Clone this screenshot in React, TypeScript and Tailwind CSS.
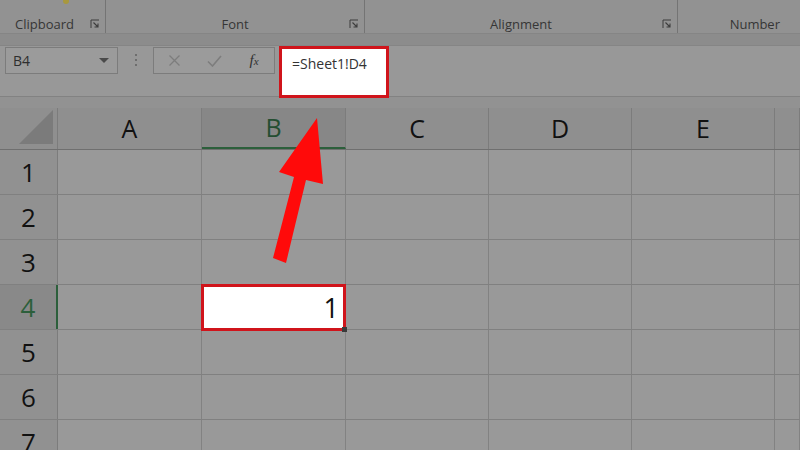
const columns = [
  { label: "A", width: "w-[144px]" },
  { label: "B", width: "w-[144px]" },
  { label: "C", width: "w-[143px]" },
  { label: "D", width: "w-[143px]" },
  { label: "E", width: "w-[143px]" },
  { label: "", width: "flex-1" },
];

const rows = [1, 2, 3, 4, 5, 6, 7];

const ribbonGroups = [
  { label: "Clipboard", width: "w-[106px]", launcher: true, labelClass: "justify-start pl-[15px]" },
  { label: "Font", width: "w-[259px]", launcher: true, labelClass: "justify-center" },
  { label: "Alignment", width: "w-[313px]", launcher: true, labelClass: "justify-center" },
  { label: "Number", width: "flex-1", launcher: false, labelClass: "justify-end pr-[20px]" },
];

function Launcher() {
  return (
    <svg width="10" height="10" viewBox="0 0 10 10" className="shrink-0">
      <path d="M1 9V1h8" fill="none" stroke="#3d3d3d" strokeWidth="1" />
      <path d="M3.5 3.5l4.5 4.5M8 4.5V8H4.5" fill="none" stroke="#3d3d3d" strokeWidth="1.1" />
    </svg>
  );
}

export default function App() {
  return (
    <main
      className="relative h-[450px] w-[800px] overflow-hidden bg-[#999999] text-[#1a1a1a]"
      style={{ fontFamily: '"Open Sans", "Liberation Sans", sans-serif' }}
    >
      {/* ribbon group labels */}
      <div className="flex h-[33px] bg-[#929292]">
        {ribbonGroups.map((g, i) => (
          <div
            key={g.label}
            className={`relative flex h-full items-end ${g.width} ${i < 3 ? "border-r border-[#747474]" : ""}`}
          >
            <div className={`flex w-full items-center ${g.labelClass}`}>
              <span className="text-[13px] leading-[18px] text-[#363636]">{g.label}</span>
            </div>
            {g.launcher && (
              <div className="absolute bottom-[4px] right-[5px]">
                <Launcher />
              </div>
            )}
          </div>
        ))}
      </div>
      <div className="absolute left-[63px] top-0 h-[4px] w-[6px] rounded-b-full bg-[#a8983e]" />

      {/* collapsed band below ribbon */}
      <div className="h-[13px] border-y border-[#858585] bg-[#8c8c8c]" />

      {/* formula bar */}
      <div className="flex h-[50px] items-start bg-[#989898]">
        <div className="ml-[5px] mt-[1px] flex h-[27px] w-[113px] items-center justify-between border border-[#7c7c7c] bg-[#9b9b9b] pl-[7px] pr-[8px]">
          <span className="text-[14px] text-[#2e2e2e]">B4</span>
          <svg width="10" height="6" viewBox="0 0 10 6">
            <path d="M0 0h10L5 5z" fill="#4a4a4a" />
          </svg>
        </div>
        <div className="flex h-[28px] w-[35px] flex-col items-center justify-center gap-[3px]">
          <span className="h-[2px] w-[2px] bg-[#6e6e6e]" />
          <span className="h-[2px] w-[2px] bg-[#6e6e6e]" />
          <span className="h-[2px] w-[2px] bg-[#6e6e6e]" />
        </div>
        <div className="mt-[1px] flex h-[27px] w-[122px] items-center border border-[#7c7c7c] bg-[#9b9b9b]">
          <div className="flex w-[40px] justify-center">
            <svg width="13" height="13" viewBox="0 0 13 13">
              <path d="M1.5 1.5l10 10M11.5 1.5l-10 10" stroke="#7d7d7d" strokeWidth="1.3" />
            </svg>
          </div>
          <div className="flex w-[40px] justify-center">
            <svg width="15" height="12" viewBox="0 0 15 12">
              <path d="M1 6.5l4.5 4.5L14 1" fill="none" stroke="#7d7d7d" strokeWidth="1.6" />
            </svg>
          </div>
          <div className="flex flex-1 justify-center">
            <span
              className="text-[15px] italic text-[#303030]"
              style={{ fontFamily: '"Liberation Serif", serif' }}
            >
              f<span className="text-[11px]">x</span>
            </span>
          </div>
        </div>
        <div className="ml-[4px] h-[52px] w-[110px] border-[3px] border-[#d0141b] bg-white pl-[10px] pt-[2px]">
          <span className="text-[14px] leading-[18px] text-[#333333]">=Sheet1!D4</span>
        </div>
      </div>

      {/* gap under formula bar */}
      <div className="h-[12px] border-t border-[#828282] bg-[#929292]" />

      {/* column headers */}
      <div className="flex h-[42px] border-b border-[#6f6f6f] bg-[#8f8f8f]">
        <div className="relative flex w-[58px] items-end justify-end border-r border-[#7c7c7c] pb-[5px] pr-[4px]">
          <svg width="34" height="34" viewBox="0 0 34 34">
            <path d="M34 0V34H0z" fill="#7b7b7b" />
          </svg>
        </div>
        {columns.map((c) => (
          <div
            key={c.label || "f"}
            className={`flex items-center justify-center border-r border-[#7c7c7c] ${c.width} ${
              c.label === "B" ? "border-b-2 border-b-[#2c5f3b] bg-[#878787] text-[#244e31]" : "text-[#111111]"
            }`}
          >
            <span className="text-[25px] leading-none">{c.label}</span>
          </div>
        ))}
      </div>

      {/* rows */}
      {rows.map((r) => (
        <div key={r} className="flex h-[45px] border-b border-[#808080]">
          <div
            className={`flex w-[58px] items-center justify-center ${
              r === 4
                ? "border-r-2 border-[#2c5f3b] bg-[#898989] text-[#2c5f3b]"
                : "border-r border-[#7c7c7c] bg-[#919191] text-[#111111]"
            }`}
          >
            <span className="text-[26px] leading-none">{r}</span>
          </div>
          {columns.map((c) => (
            <div key={c.label || "f"} className={`border-r border-[#828282] ${c.width}`}>
              {r === 4 && c.label === "B" && (
                <div className="relative -ml-[1px] -mt-[1px] flex h-[47px] w-[145px] items-center justify-end border-[3px] border-[#d0141b] bg-white pr-[4px]">
                  <span className="text-[27px] leading-none text-[#111111]">1</span>
                  <span className="absolute -bottom-[4px] -right-[4px] h-[5px] w-[5px] bg-[#3a3a3a]" />
                </div>
              )}
            </div>
          ))}
        </div>
      ))}

      {/* red pointer arrow */}
      <svg className="pointer-events-none absolute left-0 top-0" width="800" height="450" viewBox="0 0 800 450">
        <polygon
          points="317,118 323,184 306,180 286,263 273,258 294,177 279,172"
          fill="#ff0a0a"
        />
      </svg>
    </main>
  );
}
